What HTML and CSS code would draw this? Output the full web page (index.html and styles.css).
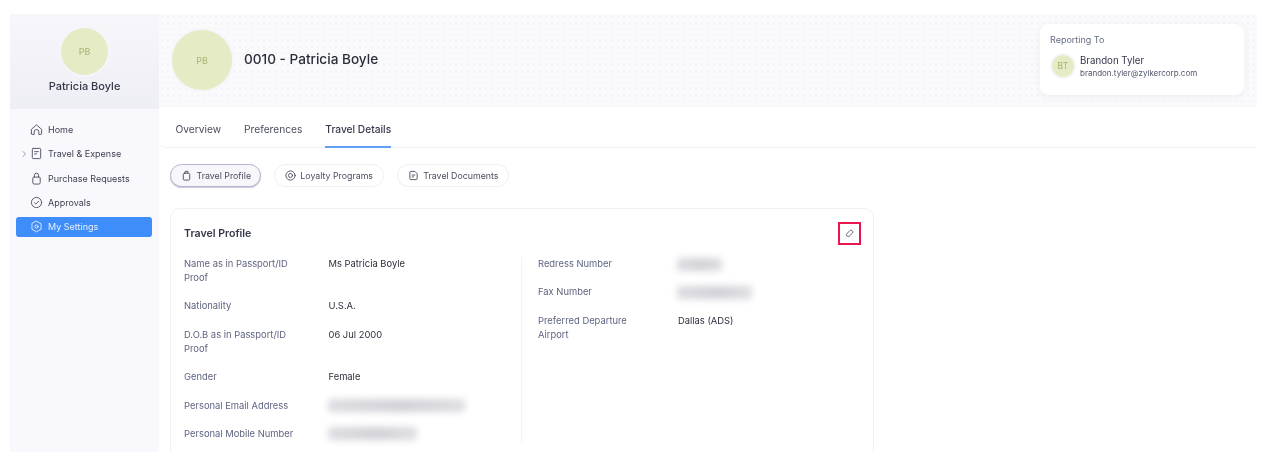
FILE: index.html
```html
<!DOCTYPE html>
<html lang="en">
<head>
<meta charset="utf-8">
<title>Patricia Boyle - Travel Details</title>
<link rel="stylesheet" href="styles.css">
</head>
<body>
<div class="shell">
  <aside class="sidebar">
    <div class="side-head">
      <div class="avatar avatar-side"><span>PB</span></div>
      <div class="side-name">Patricia Boyle</div>
    </div>
    <nav class="side-nav">
      <a class="nav-item"><svg class="nav-icon" viewBox="0 0 14 14"><path d="M1.500 11.500V6.800L7 2l5.500 4.800v4.700a.8.800 0 0 1-.8.800H9.500V9.500a2.500 2.500 0 0 0-5 0v2.800H2.300a.8.800 0 0 1-.8-.8z"/></svg><span>Home</span></a>
      <a class="nav-item"><svg class="chev" viewBox="0 0 6 8"><path d="M2 1.500l2.500 2.500L2 6.500"/></svg><svg class="nav-icon" viewBox="0 0 14 14"><rect x="2.500" y="1.500" width="9" height="11" rx="1"/><path d="M5 5h4M5 7.500h2"/></svg><span>Travel &amp; Expense</span></a>
      <a class="nav-item"><svg class="nav-icon" viewBox="0 0 14 14"><path d="M3 6.500a1 1 0 0 1 1-1h6a1 1 0 0 1 1 1v5a1.500 1.500 0 0 1-1.500 1.500h-5A1.500 1.500 0 0 1 3 11.500z"/><path d="M4.800 5.500V3.500a2.200 2.200 0 0 1 4.400 0v2"/></svg><span>Purchase Requests</span></a>
      <a class="nav-item"><svg class="nav-icon" viewBox="0 0 14 14"><circle cx="7" cy="7" r="5.500"/><path d="M4.800 7.300l1.500 1.400 2.900-3"/></svg><span>Approvals</span></a>
      <a class="nav-item nav-active"><svg class="nav-icon" viewBox="0 0 14 14"><path d="M7 1.300l4.900 2.800v5.800L7 12.700 2.100 9.900V4.100z"/><circle cx="7" cy="7" r="1.700"/></svg><span>My Settings</span></a>
    </nav>
  </aside>

  <main class="main">
    <header class="banner">
      <div class="avatar avatar-main"><span>PB</span></div>
      <h1 class="banner-title">0010 - Patricia Boyle</h1>
      <section class="report">
        <div class="report-label">Reporting To</div>
        <div class="report-row">
          <div class="avatar avatar-small"><span>BT</span></div>
          <div>
            <div class="report-name">Brandon Tyler</div>
            <div class="report-mail">brandon.tyler@zylkercorp.com</div>
          </div>
        </div>
      </section>
    </header>

    <div class="tabs">
      <a class="tab">Overview</a>
      <a class="tab">Preferences</a>
      <a class="tab tab-active">Travel Details</a>
    </div>

    <div class="pills">
      <a class="pill pill-active"><svg class="pill-icon" viewBox="0 0 12 12"><rect x="2.500" y="3.500" width="7" height="7.500" rx="1.300"/><path d="M4.500 3.500V1.500h3v2"/></svg>Travel Profile</a>
      <a class="pill"><svg class="pill-icon" viewBox="0 0 12 12"><circle cx="6" cy="6" r="5"/><circle cx="6" cy="6" r="2.200"/></svg>Loyalty Programs</a>
      <a class="pill"><svg class="pill-icon" viewBox="0 0 12 12"><path d="M2 2.500a1 1 0 0 1 1-1h4.500L10 4v5.500a1 1 0 0 1-1 1H3a1 1 0 0 1-1-1z"/><path d="M4.500 5.500h3M4.500 7.500h1.500"/></svg>Travel Documents</a>
    </div>

    <section class="card">
      <div class="card-head">
        <h2 class="card-title">Travel Profile</h2>
        <button class="edit" aria-label="Edit"><svg viewBox="0 0 12 12"><path d="M1.800 7.400l4-4.300a1.700 1.700 0 0 1 2.400-.1l.7.700a1.700 1.700 0 0 1 .1 2.400L5 10H3.300a1.500 1.500 0 0 1-1.500-1.500z"/></svg></button>
      </div>
      <div class="columns">
        <div class="col col-left">
          <div class="field"><div class="label">Name as in Passport/ID Proof</div><div class="value">Ms Patricia Boyle</div></div>
          <div class="field"><div class="label">Nationality</div><div class="value">U.S.A.</div></div>
          <div class="field"><div class="label">D.O.B as in Passport/ID Proof</div><div class="value">06 Jul 2000</div></div>
          <div class="field"><div class="label">Gender</div><div class="value">Female</div></div>
          <div class="field"><div class="label">Personal Email Address</div><div class="value"><div class="redact redact-email"></div></div></div>
          <div class="field"><div class="label">Personal Mobile Number</div><div class="value"><div class="redact redact-mobile"></div></div></div>
        </div>
        <div class="col col-right">
          <div class="field"><div class="label">Redress Number</div><div class="value"><div class="redact redact-redress"></div></div></div>
          <div class="field"><div class="label">Fax Number</div><div class="value"><div class="redact redact-fax"></div></div></div>
          <div class="field"><div class="label">Preferred Departure Airport</div><div class="value">Dallas (ADS)</div></div>
        </div>
      </div>
    </section>
  </main>
</div>
</body>
</html>
```

FILE: styles.css
```css
* { box-sizing: border-box; }
html, body { margin: 0; background: #fff; }
body {
  padding: 14px 15px 14px 10px;
  height: 466px;
  overflow: hidden;
  font-family: Inter, "Liberation Sans", sans-serif;
  font-size: 9.4px;
  color: #2c2f3c;
}
svg { fill: none; stroke: currentColor; stroke-width: 1; stroke-linecap: round; stroke-linejoin: round; display: block; }

.shell { display: flex; height: 438px; overflow: hidden; filter: blur(.35px); }

/* Sidebar */
.sidebar {
  width: 149px;
  flex: none;
  background-color: #f9f9fd;
  background-image: radial-gradient(#f3f3fa .6px, transparent .7px);
  background-size: 4px 4px;
}
.side-head {
  height: 95px;
  padding-top: 12px;
  display: flex;
  flex-direction: column;
  align-items: center;
  background: linear-gradient(#f6f6fb, #eeeef5);
}
.side-name { margin-top: 2px; font-size: 11px; font-weight: 500; line-height: 14px; color: #343746; }
.side-nav { padding: 10px 7px 0 6px; display: flex; flex-direction: column; gap: 3.600px; }
.nav-item {
  position: relative;
  height: 20.800px;
  padding-left: 14px;
  display: flex;
  align-items: center;
  gap: 5px;
  border-radius: 3px;
  color: #3d4050;
  font-size: 9px;
}
.nav-icon { width: 13px; height: 13px; flex: none; stroke: #4c4f60; }
.chev { position: absolute; left: 5px; top: 7px; width: 6px; height: 8px; stroke: #9b9eab; }
.nav-active { background: #3f8cfb; color: #e7f0ff; }
.nav-active .nav-icon { stroke: #e7f0ff; }

/* Avatars */
.avatar {
  flex: none;
  display: flex;
  align-items: center;
  justify-content: center;
  border-radius: 50%;
  background: #e5ecc5;
  border: 2px solid #f6f6fa;
  color: #a5b56f;
}
.avatar-side { width: 51px; height: 51px; font-size: 9px; }
.avatar-main { width: 64px; height: 64px; font-size: 9px; }
.avatar-small { width: 26px; height: 26px; font-size: 8.500px; letter-spacing: .3px; }

/* Main */
.main { flex: 1; min-width: 0; }
.banner {
  height: 93px;
  padding: 14px 13px 0 11px;
  display: flex;
  align-items: flex-start;
  background-color: #fafafd;
  background-image: radial-gradient(#ebebf3 .6px, transparent .8px);
  background-size: 6px 6px;
}
.banner-title { margin: 22px 0 0 10px; font-size: 13.600px; font-weight: 500; line-height: 18px; color: #2c2f3a; }
.report {
  margin: -4px 0 0 auto;
  width: 204px;
  height: 71px;
  padding: 10px 10px;
  border-radius: 9px;
  background: #fff;
  box-shadow: 0 2px 8px rgba(60, 60, 110, .06);
}
.report-label { font-size: 9px; line-height: 12px; color: #646a84; }
.report-row { margin-top: 7px; display: flex; align-items: center; gap: 4px; }
.report-name { font-size: 9.700px; line-height: 13px; color: #34364a; }
.report-mail { font-size: 8px; line-height: 12px; color: #50546a; }

.tabs {
  height: 41px;
  padding-left: 16.500px;
  display: flex;
  gap: 23px;
  align-items: stretch;
  border-bottom: 1px solid #f0f0f5;
  border-bottom-left-radius: 8px;
}
.tab {
  padding-top: 16px;
  font-size: 10.200px;
  line-height: 13px;
  color: #4b4e5e;
  border-bottom: 2px solid transparent;
  margin-bottom: -1px;
}
.tab-active { color: #34374a; font-weight: 500; border-bottom-color: #5fa0f5; }

.pills { padding: 16px 0 0 11px; display: flex; gap: 12.800px; }
.pill {
  height: 23px;
  padding: 0 10px;
  display: flex;
  align-items: center;
  gap: 4.500px;
  border-radius: 12px;
  border: 1px solid #eeeef4;
  color: #4b4e5e;
  font-size: 8.800px;
}
.pill-active { padding-right: 9px; background: #f6f6fb; border-color: #b3b5cb; box-shadow: 0 1px 1px #c9cadb; }
.pill-icon { width: 11px; height: 11px; flex: none; }

.card {
  margin: 21px 0 0 11px;
  width: 704px;
  height: 262px;
  padding: 0 12px 0 13px;
  border: 1px solid #f1f1f6;
  border-radius: 10px;
}
.card-head { height: 48px; display: flex; align-items: center; justify-content: space-between; }
.card-title { margin: 0; font-size: 10.600px; font-weight: 600; color: #34374a; }
.edit {
  width: 23px;
  height: 23px;
  padding: 0;
  display: flex;
  align-items: center;
  justify-content: center;
  background: #fff;
  border: 2px solid #e9174f;
  color: #4c4f60;
}
.edit svg { width: 10px; height: 10px; }

.columns { display: flex; }
.col { display: flex; flex-direction: column; gap: 14.400px; }
.col-left { width: 338px; height: 185px; border-right: 1px solid #f3f3f7; }
.col-right { padding-left: 16px; }
.field { display: flex; line-height: 14px; }
.label { color: #5f6480; font-size: 9.400px; }
.value { color: #2c2f3c; font-size: 9.400px; }
.col-left .label { width: 144.500px; padding-right: 24px; }
.col-right .label { width: 140px; padding-right: 30px; }

.redact {
  height: 13px;
  margin-top: .5px;
  margin-left: -1px;
  border-radius: 3px;
  filter: blur(3.500px);
  background: linear-gradient(90deg, #dcdce1, #d0d0d6 55%, #dedee3);
}
.redact-email { width: 137px; }
.redact-mobile { width: 89px; }
.redact-redress { width: 45px; }
.redact-fax { width: 75px; }
```
